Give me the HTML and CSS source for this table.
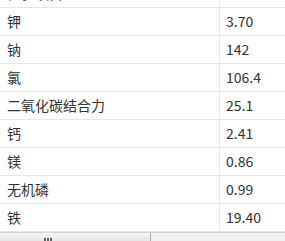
FILE: index.html
```html
<!DOCTYPE html>
<html>
<head>
<meta charset="utf-8">
<link rel="stylesheet" href="styles.css">
</head>
<body>
<div class="viewport">
  <table class="grid">
    <tr><td class="name">检验项目</td><td class="val"></td></tr>
    <tr><td class="name">钾</td><td class="val">3.70</td></tr>
    <tr><td class="name">钠</td><td class="val">142</td></tr>
    <tr><td class="name">氯</td><td class="val">106.4</td></tr>
    <tr><td class="name">二氧化碳结合力</td><td class="val">25.1</td></tr>
    <tr><td class="name">钙</td><td class="val">2.41</td></tr>
    <tr><td class="name">镁</td><td class="val">0.86</td></tr>
    <tr><td class="name">无机磷</td><td class="val">0.99</td></tr>
    <tr><td class="name">铁</td><td class="val">19.40</td></tr>
  </table>
</div>
<div class="hscroll">
  <div class="thumb"><span class="grip"></span></div>
</div>
</body>
</html>
```
FILE: styles.css
```css
html, body {
  margin: 0;
  padding: 0;
  background: #ffffff;
}
body {
  width: 285px;
  height: 241px;
  overflow: hidden;
  font-family: "Noto Sans CJK SC", "Noto Sans", sans-serif;
  color: #333333;
}
.viewport {
  height: 232px;
  overflow: hidden;
}
.grid {
  border-collapse: separate;
  border-spacing: 0;
  margin-top: -20px;
  width: 285px;
  table-layout: fixed;
}
.grid td {
  height: 27px;
  padding: 0 0 0 7px;
  border-bottom: 1px solid #e6e6e6;
  font-size: 14px;
  line-height: 27px;
  white-space: nowrap;
  vertical-align: middle;
  box-sizing: content-box;
}
.grid td.name {
  width: 212px;
  border-right: 1px solid #e6e6e6;
}
.grid td.val {
  padding-left: 6px;
}
.hscroll {
  height: 8px;
  border-top: 1px solid #d4d4d4;
  background: #f0f0f0;
  display: flex;
}
.thumb {
  width: 151px;
  height: 8px;
  background: linear-gradient(#f6f6f6, #e6e6e6);
  border-right: 1px solid #a8a8a8;
  display: flex;
  padding-left: 44px;
  box-sizing: border-box;
}
.grip {
  margin-top: 5px;
  width: 8px;
  height: 3px;
  background: repeating-linear-gradient(90deg, #666 0 2px, transparent 2px 3px);
}
```
